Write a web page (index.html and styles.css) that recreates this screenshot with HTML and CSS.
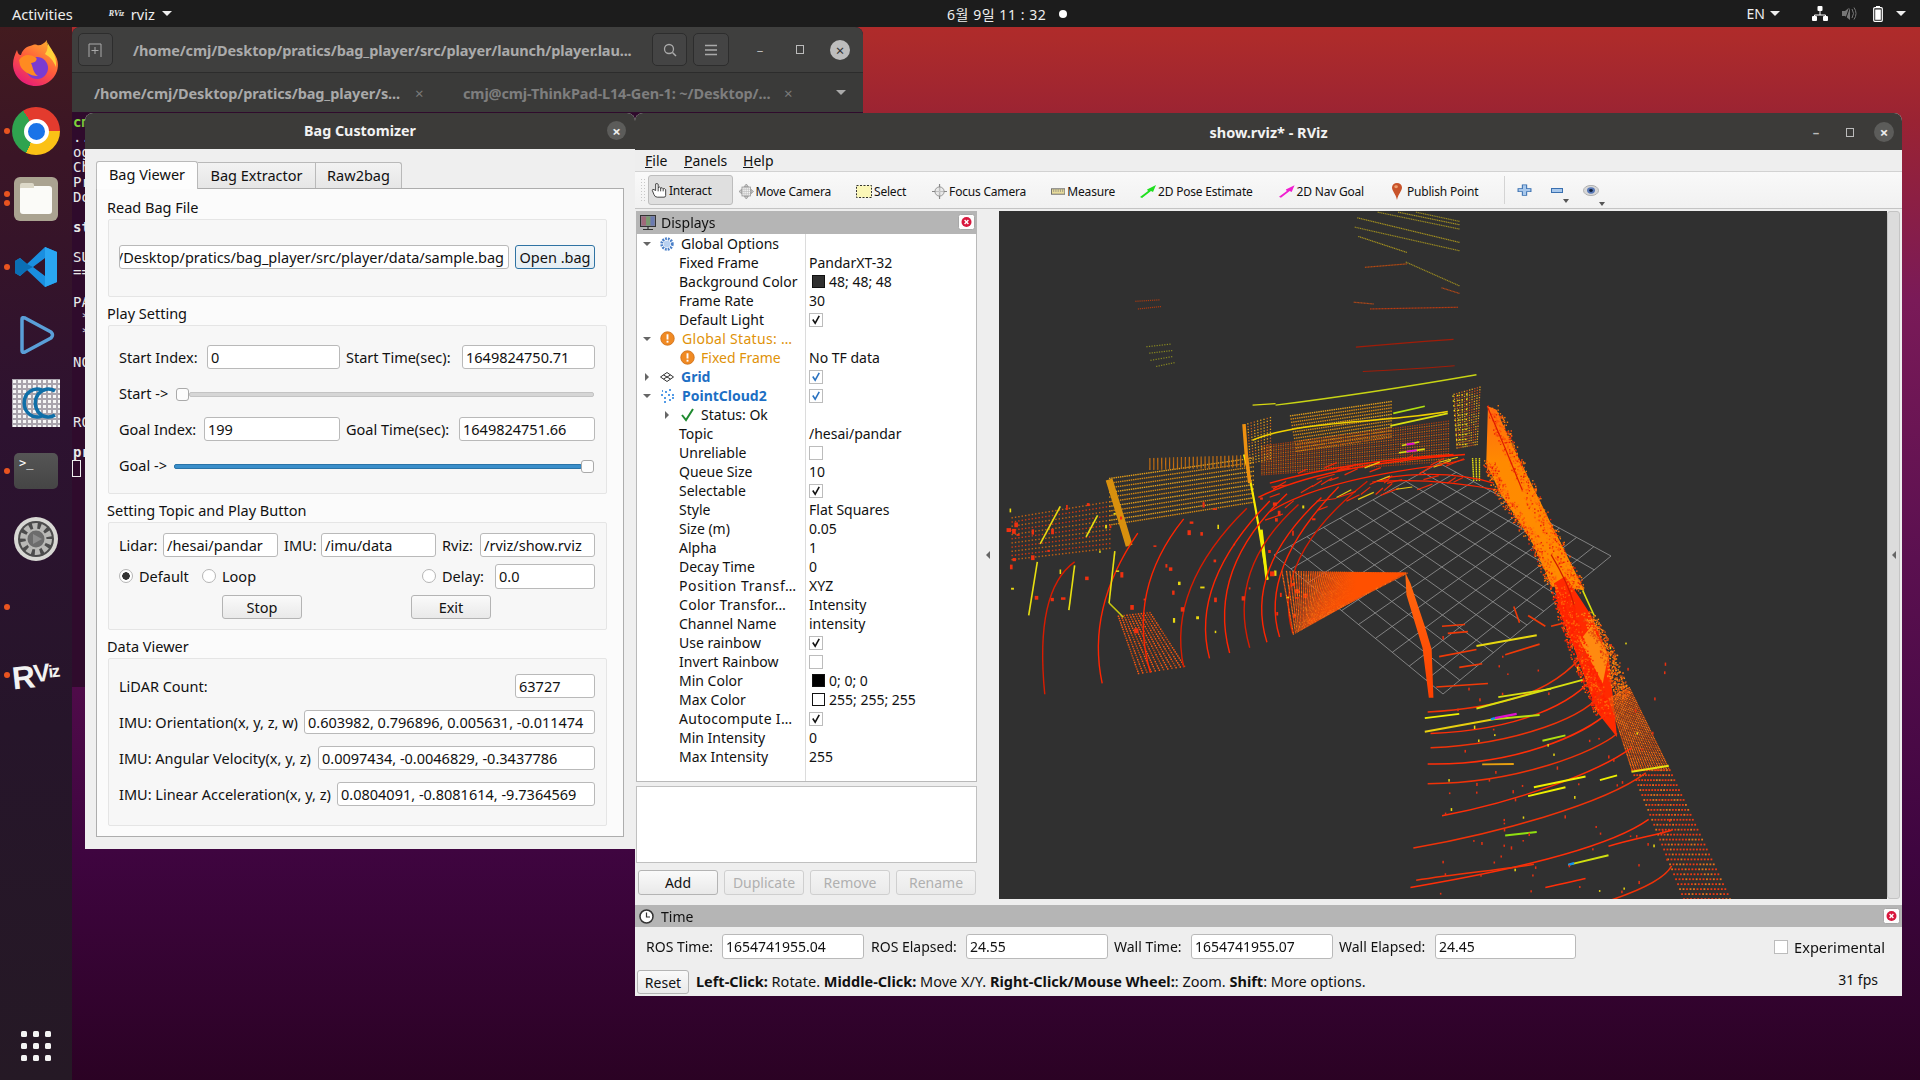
FILE: index.html
```html
<!DOCTYPE html>
<html lang="en">
<head>
<meta charset="utf-8">
<title>rviz desktop</title>
<link rel="stylesheet" href="styles.css">
</head>
<body>
<svg class="defs" width="0" height="0" aria-hidden="true">
  <symbol id="check" viewBox="0 0 13 13"><path d="M3 6.5 5.6 10.5 10 2.5" fill="none" stroke="currentColor" stroke-width="1.7"/></symbol>
  <symbol id="warn" viewBox="0 0 16 16"><circle cx="8" cy="8" r="7.2" fill="#f08a24" stroke="#c96a10" stroke-width="0.8"/><rect x="7" y="3.5" width="2" height="5.6" fill="#fff"/><rect x="7" y="10.4" width="2" height="2" fill="#fff"/></symbol>
  <symbol id="panelclose" viewBox="0 0 17 16"><rect x="0.5" y="0.5" width="16" height="15" rx="2" fill="#fdfdfd" stroke="#a8a8a8"/><circle cx="8.5" cy="8" r="5" fill="#d8163c"/><path d="M6.6 6.1 10.4 9.9M10.4 6.1 6.6 9.9" stroke="#fff" stroke-width="1.4"/></symbol>
</svg>
<div class="screen">
  <header class="topbar">
    <span class="activities">Activities</span>
    <span class="appmenu"><span class="appmenu-logo">RViz</span><span>rviz</span><i class="caret"></i></span>
    <span class="clock">6월 9일 11 : 32<i class="clock-dot"></i></span>
    <span class="status">
      <span class="lang">EN</span><i class="caret"></i>
      <svg class="st-net" width="16" height="15" viewBox="0 0 16 15"><path d="M8 5V9M2.5 11V9H13.500V11" fill="none" stroke="#fff"/><rect x="5.500" y="0" width="5" height="5" rx="1" fill="#fff"/><rect x="0" y="10" width="5" height="5" rx="1" fill="#fff"/><rect x="11" y="10" width="5" height="5" rx="1" fill="#fff"/></svg>
      <svg class="st-vol" width="15" height="15" viewBox="0 0 15 15"><path d="M0 5H3L8 1V14L3 10H0Z" fill="#777"/><path d="M10 3Q13 7.500 10 12M12 1.500Q16 7.500 12 13.500" fill="none" stroke="#777"/><path d="M8 0 3 15" stroke="#1c1c1c"/></svg>
      <svg class="st-bat" width="10" height="16" viewBox="0 0 10 16"><rect x="3" y="0" width="4" height="2" fill="#fff"/><rect x="0.700" y="1.700" width="8.600" height="13.600" rx="1" fill="none" stroke="#fff" stroke-width="1.200"/><rect x="2.200" y="3.500" width="5.600" height="10.300" fill="#fff"/></svg>
      <i class="caret"></i>
    </span>
  </header>

  <main class="desktop">
    <nav class="dock">
      <div class="slot">
        <svg width="46" height="46" viewBox="0 0 46 46">
          <defs>
            <linearGradient id="ffa" x1="0.200" y1="1" x2="0.800" y2="0"><stop offset="0" stop-color="#e3157e"/><stop offset="0.500" stop-color="#ff5a3c"/><stop offset="1" stop-color="#ffb12b"/></linearGradient>
          </defs>
          <path d="M34 0C33 5 36 7 40 12 45 18 46 25 44 31 41 40 32 46 23 46 10 46 0 36 0 24 0 19 2 14 4 10 5 14 6 15 8 15 9 11 12 7 17 6 20 5 22 4 24 5 27 6 31 4 34 0Z" fill="url(#ffa)"/>
          <circle cx="24" cy="28" r="11" fill="#7b3bd0"/>
          <path d="M6 20C10 14 17 14 22 17 26 19 22 23 18 23 20 27 20 33 25 36 17 36 9 31 7 25Z" fill="#ff8b21"/>
          <path d="M34 2C38 9 44 15 43 27 40 20 37 17 32 14 35 10 35 6 34 2Z" fill="#ffd23a"/>
        </svg>
      </div>
      <div class="slot"><i class="run"></i><div class="chrome"><div class="chrome-core"></div></div></div>
      <div class="slot"><i class="run run-two"></i><div class="files"><div class="folder"></div></div></div>
      <div class="slot"><i class="run"></i>
        <svg width="42" height="42" viewBox="0 0 42 42"><path d="M30 1 42 6V36L30 41 12 24 5 30 0 27V15L5 12 12 18 30 1ZM30 12 18 21 30 30Z" fill="#1a8fe0"/><path d="M30 1 42 6V36L30 41V1Z" fill="#2aa6f2"/><path d="M5 12 12 18 18 21 12 24 5 30 0 27V15Z" fill="#0b6fb5"/></svg>
      </div>
      <div class="slot">
        <svg width="38" height="40" viewBox="0 0 38 40"><path d="M5 4Q5 2 8 3L34 17Q37 20 34 23L8 37Q5 38 5 36Z" fill="none" stroke="#5a9fd8" stroke-width="3.500" stroke-linejoin="round"/></svg>
      </div>
      <div class="slot">
        <div class="cc">
          <svg width="48" height="48" viewBox="0 0 48 48"><path d="M30 11A13 14 0 1 0 30 37" fill="none" stroke="#0f6fa8" stroke-width="3.500"/><path d="M43 12A13 14 0 1 0 43 36" fill="none" stroke="#0f6fa8" stroke-width="3.500"/></svg>
        </div>
      </div>
      <div class="slot"><i class="run"></i><div class="termicon">&gt;_</div></div>
      <div class="slot">
        <svg width="46" height="46" viewBox="0 0 46 46"><circle cx="23" cy="23" r="22" fill="#d8d8d4"/><circle cx="23" cy="23" r="18" fill="#4c4c4c"/><circle cx="23" cy="23" r="13" fill="none" stroke="#b9b9b6" stroke-width="6" stroke-dasharray="5 3.200"/><circle cx="23" cy="23" r="9.500" fill="#6c6c6c" stroke="#b9b9b6" stroke-width="2"/><path d="M20 18 29 23 20 28Z" fill="#8d8d8d"/></svg>
      </div>
      <div class="slot"><i class="run"></i></div>
      <div class="slot"><i class="run"></i><div class="rvizlogo">R<span class="rvizlogo-v">V</span><span class="rvizlogo-iz">iz</span></div></div>
      <div class="slot slot-last">
        <div class="apps"><i></i><i></i><i></i><i></i><i></i><i></i><i></i><i></i><i></i></div>
      </div>
    </nav>

    <section class="window term">
      <div class="term-head">
        <span class="hbtn hbtn-new"><svg width="16" height="16" viewBox="0 0 16 16"><path d="M1 15V2H13V15M7 5V12M3.500 8.500H10.500" fill="none" stroke="#aaa"/></svg></span>
        <span class="term-title">/home/cmj/Desktop/pratics/bag_player/src/player/launch/player.lau...</span>
        <span class="hbtn hbtn-search"><svg width="16" height="16" viewBox="0 0 16 16"><circle cx="7" cy="7" r="4.500" fill="none" stroke="#aaa" stroke-width="1.300"/><path d="M10.500 10.500 14 14" stroke="#aaa" stroke-width="1.500"/></svg></span>
        <span class="hbtn hbtn-menu"><svg width="14" height="12" viewBox="0 0 14 12"><path d="M1 1.500H13M1 6H13M1 10.500H13" stroke="#aaa" stroke-width="1.300"/></svg></span>
        <span class="wbtns wbtns-term">
          <span class="wb">–</span><span class="wb"><i class="wb-square"></i></span><span class="wb wb-close wb-close-light">×</span>
        </span>
      </div>
      <div class="term-tabs">
        <span class="ttab ttab-on">/home/cmj/Desktop/pratics/bag_player/s...</span><span class="ttab-x">×</span>
        <span class="ttab ttab-off">cmj@cmj-ThinkPad-L14-Gen-1: ~/Desktop/...</span><span class="ttab-x">×</span>
        <i class="caret caret-term"></i>
      </div>
      <pre class="term-body"><b class="tg">cm</b>
...
og
Ch
Pr
Do

<b>st</b>

SU
==

PA
 *
 *

NO



RO

<b>pr</b></pre>
      <i class="term-cursor"></i>
    </section>

    <section class="window bag">
      <div class="titlebar bag-title">
        <span>Bag Customizer</span>
        <span class="wb wb-close bag-close">×</span>
      </div>
      <div class="bag-body">
        <div class="tabs">
          <span class="tab tab-on">Bag Viewer</span>
          <span class="tab tab-ext">Bag Extractor</span>
          <span class="tab tab-raw">Raw2bag</span>
        </div>
        <div class="pane">
          <div class="grp-label">Read Bag File</div>
          <div class="grp grp-read">
            <div class="row gap6">
              <div class="field field-clip w390">/Desktop/pratics/bag_player/src/player/data/sample.bag</div>
              <button class="btn btn-focus w80">Open .bag</button>
            </div>
          </div>

          <div class="grp-label">Play Setting</div>
          <div class="grp grp-play">
            <div class="row">
              <label class="w88">Start Index:</label><div class="field w133">0</div>
              <label class="w116 ml6">Start Time(sec):</label><div class="field w133">1649824750.71</div>
            </div>
            <div class="slider-row sr-start">
              <label class="w57">Start -&gt;</label>
              <i class="handle"></i><i class="groove"></i>
            </div>
            <div class="row">
              <label class="w85">Goal Index:</label><div class="field w136">199</div>
              <label class="w113 ml6">Goal Time(sec):</label><div class="field w136">1649824751.66</div>
            </div>
            <div class="slider-row sr-goal">
              <label class="w55">Goal -&gt;</label>
              <i class="groove groove-on"></i><i class="handle handle-end"></i>
            </div>
          </div>

          <div class="grp-label">Setting Topic and Play Button</div>
          <div class="grp grp-topic">
            <div class="row">
              <label class="w44">Lidar:</label><div class="field w115">/hesai/pandar</div>
              <label class="w37 ml6">IMU:</label><div class="field w115">/imu/data</div>
              <label class="w38 ml6">Rviz:</label><div class="field w115">/rviz/show.rviz</div>
            </div>
            <div class="row row-radio">
              <label class="radio-item w83"><i class="radio radio-on"></i>Default</label>
              <label class="radio-item w220"><i class="radio"></i>Loop</label>
              <label class="radio-item w73"><i class="radio"></i>Delay:</label>
              <div class="field w100">0.0</div>
            </div>
            <div class="row row-btns">
              <button class="btn w80 ml103">Stop</button>
              <button class="btn w80 ml109">Exit</button>
            </div>
          </div>

          <div class="grp-label">Data Viewer</div>
          <div class="grp grp-data">
            <div class="row row-sb"><label>LiDAR Count:</label><div class="field w80">63727</div></div>
            <div class="row row-sb"><label>IMU: Orientation(x, y, z, w)</label><div class="field w291">0.603982, 0.796896, 0.005631, -0.011474</div></div>
            <div class="row row-sb"><label>IMU: Angular Velocity(x, y, z)</label><div class="field w277">0.0097434, -0.0046829, -0.3437786</div></div>
            <div class="row row-sb"><label>IMU: Linear Acceleration(x, y, z)</label><div class="field w258">0.0804091, -0.8081614, -9.7364569</div></div>
          </div>
        </div>
      </div>
    </section>

    <section class="window rviz">
      <div class="titlebar rviz-title">
        <span>show.rviz* - RViz</span>
        <span class="wbtns wbtns-rviz">
          <span class="wb">–</span><span class="wb"><i class="wb-square"></i></span><span class="wb wb-close">×</span>
        </span>
      </div>
      <div class="menubar">
        <span><u>F</u>ile</span><span><u>P</u>anels</span><span><u>H</u>elp</span>
      </div>
      <div class="toolbar">
        <i class="tb-grip"></i>
        <span class="tool t-interact">
          <svg width="16" height="15" viewBox="0 0 18 18"><path d="M5 1V9L3 8Q1 7 1 9L3 14Q4 17 7 17H15Q17 17 17 15V8Q16 6 14 7 13 5 11 6 10 4 8 5.500V1.500Q6.500 0 5 1ZM8 5.500V10M11 6V10M14 7V10" fill="#fff" stroke="#222"/></svg>
          Interact
        </span>
        <span class="tool t-move">
          <svg width="16" height="15" viewBox="0 0 17 17" preserveAspectRatio="none"><path d="M8.500 0 11 3H6ZM8.500 17 6 14H11ZM0 8.500 3 6V11ZM17 8.500 14 11V6Z" fill="#c8c8c8" stroke="#777" stroke-width="0.600"/><rect x="3.500" y="3.500" width="10" height="10" fill="none" stroke="#999"/><path d="M8.500 3V14M3 8.500H14M3.500 6H13.500M3.500 11H13.500M6 3.500V13.500M11 3.500V13.500" stroke="#bbb" stroke-width="0.700"/></svg>
          Move Camera
        </span>
        <span class="tool t-select">
          <svg width="16" height="13" viewBox="0 0 16 14" preserveAspectRatio="none"><rect x="0.500" y="0.500" width="15" height="13" fill="#fbf7b8" stroke="#222" stroke-dasharray="2 1.500"/></svg>
          Select
        </span>
        <span class="tool t-focus">
          <svg width="18" height="17" viewBox="0 0 18 18"><circle cx="9" cy="9" r="5.500" fill="#e8e8e8" stroke="#888"/><path d="M9 0V18M0 9H18" stroke="#888" stroke-width="1.400"/><path d="M9 4V14M4 9H14" stroke="#ccc"/></svg>
          Focus Camera
        </span>
        <span class="tool t-measure">
          <svg width="16" height="7" viewBox="0 0 16 7"><rect x="0.500" y="0.500" width="15" height="6" fill="#e8dc9c" stroke="#666"/><path d="M3 1V4M5.500 1V4M8 1V4M10.500 1V4M13 1V4" stroke="#777" stroke-width="0.700"/></svg>
          Measure
        </span>
        <span class="tool t-pose">
          <svg width="16" height="13" viewBox="0 0 16 13"><path d="M0 12 8 6 7 4.500 16 0 13 7 11 6 2 13Z" fill="#20e020"/></svg>
          2D Pose Estimate
        </span>
        <span class="tool t-nav">
          <svg width="16" height="13" viewBox="0 0 16 13"><path d="M0 12 8 6 7 4.500 16 0 13 7 11 6 2 13Z" fill="#f01fd0"/></svg>
          2D Nav Goal
        </span>
        <span class="tool t-pub">
          <svg width="10" height="17" viewBox="0 0 11 23" preserveAspectRatio="none"><path d="M5.500 0A5.500 6 0 0 1 11 6C11 11 7 14 5.500 23 4 14 0 11 0 6A5.500 6 0 0 1 5.500 0Z" fill="#c8532a"/><circle cx="4.500" cy="5" r="2" fill="#f0a070"/></svg>
          Publish Point
        </span>
        <i class="tb-sep"></i>
        <svg class="tb-ic tb-plus" width="15" height="12" viewBox="0 0 14 16" preserveAspectRatio="none"><path d="M5 1H9V6H13V10H9V15H5V10H1V6H5Z" fill="#a8c8ec" stroke="#3a70b0"/></svg>
        <span class="tb-ic tb-minus"><svg width="12" height="5" viewBox="0 0 12 5"><rect x="0.500" y="0.500" width="11" height="4" fill="#a8c8ec" stroke="#3a70b0"/></svg><i class="tb-drop"></i></span>
        <span class="tb-ic tb-eye"><svg width="16" height="11" viewBox="0 0 16 14" preserveAspectRatio="none"><ellipse cx="8" cy="7" rx="7.500" ry="6.500" fill="#d8d8d8" stroke="#aaa"/><circle cx="8" cy="7" r="4" fill="#5a7ab8"/><circle cx="8" cy="7" r="1.800" fill="#10203c"/></svg><i class="tb-drop"></i></span>
      </div>

      <div class="rv-main">
        <div class="displays">
          <div class="paneltitle">
            <svg width="16" height="15" viewBox="0 0 16 15"><rect x="0.500" y="0.500" width="15" height="11" fill="#889" stroke="#333"/><rect x="1.500" y="1.500" width="4.500" height="9" fill="#a06a7a"/><rect x="6" y="1.500" width="4.500" height="9" fill="#7a9a70"/><rect x="10.500" y="1.500" width="4" height="9" fill="#6a7ab0"/><path d="M3 14.500H13M8 12V14" stroke="#333" stroke-width="1.200"/></svg>
            <span class="pt-name">Displays</span>
            <svg class="pt-close" width="17" height="16"><use href="#panelclose"/></svg>
          </div>
          <div class="tree">
            <div class="tr"><div class="nm"><i class="ar ar-d"></i><svg class="ic" width="14" height="14" viewBox="0 0 14 14"><circle cx="7" cy="7" r="5.300" fill="none" stroke="#4a7fc8" stroke-width="2.800" stroke-dasharray="1.800 1"/><circle cx="7" cy="7" r="3.300" fill="#b8d0f0"/></svg>Global Options</div><div class="vl"></div></div>
            <div class="tr"><div class="nm nm-c">Fixed Frame</div><div class="vl">PandarXT-32</div></div>
            <div class="tr"><div class="nm nm-c">Background Color</div><div class="vl"><i class="swatch sw-bg"></i>48; 48; 48</div></div>
            <div class="tr"><div class="nm nm-c">Frame Rate</div><div class="vl">30</div></div>
            <div class="tr"><div class="nm nm-c">Default Light</div><div class="vl"><i class="cb"><svg width="13" height="13"><use href="#check"/></svg></i></div></div>
            <div class="tr"><div class="nm c-warn ls3"><i class="ar ar-d"></i><svg class="ic" width="15" height="15"><use href="#warn"/></svg>Global Status: …</div><div class="vl"></div></div>
            <div class="tr"><div class="nm nm-l1 c-warn"><svg class="ic-l1" width="15" height="15"><use href="#warn"/></svg>Fixed Frame</div><div class="vl">No TF data</div></div>
            <div class="tr"><div class="nm c-blue"><i class="ar ar-r"></i><svg class="ic" width="14" height="10" viewBox="0 0 14 10"><path d="M7 .5 13.500 5 7 9.500 .5 5ZM3.500 3 10.500 7M10.500 3 3.500 7" fill="none" stroke="#333"/></svg>Grid</div><div class="vl"><i class="cb cb-blue"><svg width="13" height="13"><use href="#check"/></svg></i></div></div>
            <div class="tr"><div class="nm c-blue"><i class="ar ar-d"></i><svg class="ic" width="15" height="14" viewBox="0 0 15 14"><path d="M1 6H3M5 3H7M4 9H6M9 1H11M8 6H10M12 6H14M9 11H11M4 13H6M12 9H14M2 2H3" stroke="#1c7ce0" stroke-width="1.600"/></svg>PointCloud2</div><div class="vl"><i class="cb cb-blue"><svg width="13" height="13"><use href="#check"/></svg></i></div></div>
            <div class="tr"><div class="nm nm-l1"><i class="ar ar-r ar-l1"></i><svg class="ic-l1" width="15" height="14" viewBox="0 0 15 14"><path d="M2 7 6 12 13 1" fill="none" stroke="#1f8a30" stroke-width="2"/></svg>Status: Ok</div><div class="vl"></div></div>
            <div class="tr"><div class="nm nm-c">Topic</div><div class="vl">/hesai/pandar</div></div>
            <div class="tr"><div class="nm nm-c">Unreliable</div><div class="vl"><i class="cb"></i></div></div>
            <div class="tr"><div class="nm nm-c">Queue Size</div><div class="vl">10</div></div>
            <div class="tr"><div class="nm nm-c">Selectable</div><div class="vl"><i class="cb"><svg width="13" height="13"><use href="#check"/></svg></i></div></div>
            <div class="tr"><div class="nm nm-c">Style</div><div class="vl">Flat Squares</div></div>
            <div class="tr"><div class="nm nm-c">Size (m)</div><div class="vl">0.05</div></div>
            <div class="tr"><div class="nm nm-c">Alpha</div><div class="vl">1</div></div>
            <div class="tr"><div class="nm nm-c">Decay Time</div><div class="vl">0</div></div>
            <div class="tr"><div class="nm nm-c ls6">Position Transf…</div><div class="vl">XYZ</div></div>
            <div class="tr"><div class="nm nm-c ls3">Color Transfor…</div><div class="vl">Intensity</div></div>
            <div class="tr"><div class="nm nm-c">Channel Name</div><div class="vl">intensity</div></div>
            <div class="tr"><div class="nm nm-c">Use rainbow</div><div class="vl"><i class="cb"><svg width="13" height="13"><use href="#check"/></svg></i></div></div>
            <div class="tr"><div class="nm nm-c">Invert Rainbow</div><div class="vl"><i class="cb"></i></div></div>
            <div class="tr"><div class="nm nm-c">Min Color</div><div class="vl"><i class="swatch sw-min"></i>0; 0; 0</div></div>
            <div class="tr"><div class="nm nm-c">Max Color</div><div class="vl"><i class="swatch sw-max"></i>255; 255; 255</div></div>
            <div class="tr"><div class="nm nm-c ls3">Autocompute I…</div><div class="vl"><i class="cb"><svg width="13" height="13"><use href="#check"/></svg></i></div></div>
            <div class="tr"><div class="nm nm-c">Min Intensity</div><div class="vl">0</div></div>
            <div class="tr"><div class="nm nm-c">Max Intensity</div><div class="vl">255</div></div>
            <div class="tr tr-fill"><div class="nm"></div><div class="vl"></div></div>
          </div>
          <div class="descbox"></div>
          <div class="dbtns">
            <button class="btn w80">Add</button>
            <button class="btn btn-off w80">Duplicate</button>
            <button class="btn btn-off w80">Remove</button>
            <button class="btn btn-off w80">Rename</button>
          </div>
        </div>
        <div class="split"><i class="tri-l"></i></div>
        <canvas id="cloud" class="view" width="888" height="688"></canvas>
        <div class="sidebar"><i class="tri-l"></i></div>
      </div>

      <div class="paneltitle time-title">
        <svg width="15" height="15" viewBox="0 0 15 15"><circle cx="7.500" cy="7.500" r="6.500" fill="#fff" stroke="#333" stroke-width="1.500"/><path d="M7.500 3.500V8H11" fill="none" stroke="#333" stroke-width="1.200"/></svg>
        <span class="pt-name">Time</span>
        <svg class="pt-close" width="17" height="16"><use href="#panelclose"/></svg>
      </div>
      <div class="timerow">
        <label class="w76">ROS Time:</label><div class="field w142">1654741955.04</div>
        <label class="w95 ml7">ROS Elapsed:</label><div class="field w142">24.55</div>
        <label class="w77 ml6">Wall Time:</label><div class="field w142">1654741955.07</div>
        <label class="w96 ml6">Wall Elapsed:</label><div class="field w141">24.45</div>
        <label class="exp"><i class="cb"></i>Experimental</label>
      </div>
      <div class="statusrow">
        <button class="btn w52">Reset</button>
        <span class="hint"><b>Left-Click:</b> Rotate. <b>Middle-Click:</b> Move X/Y. <b>Right-Click/Mouse Wheel:</b>: Zoom. <b>Shift</b>: More options.</span>
        <span class="fps">31 fps</span>
      </div>
    </section>
  </main>
</div>
<script src="script.js"></script>
</body>
</html>
```
FILE: styles.css
```css
* { box-sizing: border-box; }
html, body { margin: 0; padding: 0; }
body { font-family: "Noto Sans", "Noto Sans CJK KR", sans-serif; font-size: 14px; color: #111; }
.defs { position: absolute; }
i { display: block; font-style: normal; }
label { display: block; white-space: nowrap; }

.screen {
  width: 1920px; height: 1080px; display: flex; flex-direction: column; overflow: hidden;
  background: linear-gradient(180deg, #b52b2a 0, #ad2b2b 40px, #9a2333 120px, #7a1a58 300px, #5b1050 560px, #3f0540 850px, #2b0224 1080px);
}

/* top bar */
.topbar { height: 27px; flex: none; background: #1c1c1c; color: #eee; display: flex; align-items: center; position: relative; font-size: 14px; }
.activities { margin-left: 12px; font-size: 14.6px; }
.appmenu { display: flex; align-items: center; margin-left: 36px; gap: 7px; font-size: 14.6px; }
.appmenu-logo { font: bold italic 8px "Liberation Serif", serif; width: 15px; }
.caret { width: 0; height: 0; border-left: 5px solid transparent; border-right: 5px solid transparent; border-top: 5px solid #eee; }
.clock { position: absolute; left: 947px; display: flex; align-items: center; letter-spacing: .55px; }
.clock-dot { width: 8px; height: 8px; border-radius: 50%; background: #fff; margin-left: 13px; }
.status { margin-left: auto; display: flex; align-items: center; margin-right: 14px; }
.lang { margin-right: 5px; font-size: 14px; }
.st-net { margin-left: 32px; }
.st-vol { margin-left: 14px; }
.st-bat { margin-left: 16px; margin-right: 13px; }

/* desktop and dock */
.desktop { flex: 1; position: relative; }
.dock { position: absolute; left: 0; top: 0; bottom: 0; width: 72px; background: linear-gradient(180deg, #431b1f 0, #3a1526 130px, #2d1230 400px, #26152a 700px, #251925 100%); display: flex; flex-direction: column; padding-top: 2px; }
.slot { height: 68px; flex: none; display: flex; align-items: center; justify-content: center; position: relative; }
.slot-last { margin-top: auto; }
.run { position: absolute; left: 4px; top: 31px; width: 6px; height: 6px; border-radius: 50%; background: #e95420; }
.run-two { top: 26px; box-shadow: 0 9px 0 #e95420; }
.chrome { width: 48px; height: 48px; border-radius: 50%; background: conic-gradient(from -32deg, #e33b2e 0 122deg, #fbc116 122deg 236deg, #2fa34f 236deg 360deg); display: flex; align-items: center; justify-content: center; }
.chrome-core { width: 25px; height: 25px; border-radius: 50%; background: #1a73e8; border: 4px solid #fff; }
.files { width: 44px; height: 44px; border-radius: 6px; background: #aaa391; display: flex; align-items: center; justify-content: center; }
.folder { width: 32px; height: 28px; background: #fbfbf8; border-radius: 3px; position: relative; margin-top: 2px; }
.folder::before { content: ""; position: absolute; left: 0; top: -3px; width: 14px; height: 5px; background: #dcd8c8; border-radius: 2px 2px 0 0; }
.cc { width: 48px; height: 48px; background-color: #a9a4ad; background-image: radial-gradient(circle, #f6f6f6 1.500px, transparent 1.700px); background-size: 5px 5px; }
.termicon { width: 44px; height: 36px; border-radius: 5px; background: linear-gradient(#555, #454545); color: #fff; font: 12px/12px "DejaVu Sans Mono", monospace; padding: 4px 0 0 5px; }
.rvizlogo { color: #f2f2f2; font: bold 32px/32px "Liberation Sans", sans-serif; letter-spacing: -1.500px; transform: rotate(-6deg); display: flex; align-items: flex-start; margin-top: 2px; }
.rvizlogo-v { font-size: 25px; line-height: 26px; }
.rvizlogo-iz { font-size: 17px; line-height: 20px; margin-top: 4px; }
.apps { display: grid; grid-template-columns: repeat(3, 6px); gap: 6px; }
.apps i { width: 6px; height: 6px; border-radius: 1.500px; background: #f4f4f4; }

/* windows */
.window { position: absolute; border-radius: 8px 8px 0 0; overflow: hidden; }
.wb { width: 20px; height: 20px; display: flex; align-items: center; justify-content: center; color: #bbb; font-size: 13px; }
.wb-square { width: 8px; height: 9px; border: 1px solid #bbb; }
.wb-close { border-radius: 50%; background: #5c5c5a; color: #eee; font-size: 15px; }
.wb-close-light { background: #bdbdbd; color: #333; }
.titlebar { flex: none; background: #3c3b39; color: #f2f2f2; font-weight: 700; display: flex; align-items: center; justify-content: center; position: relative; font-size: 14.300px; }

/* terminal */
.term { left: 72px; top: 0; width: 791px; height: 660px; background: #2f0b2c; display: flex; flex-direction: column; }
.term-head { height: 46px; background: #3f3f3e; border-bottom: 1px solid #2c2c2c; display: flex; align-items: center; padding-left: 6px; flex: none; }
.hbtn { height: 33px; border: 1px solid #2d2d2d; border-radius: 5px; display: flex; align-items: center; justify-content: center; background: #444; flex: none; }
.hbtn-new { width: 35px; }
.hbtn-search { width: 35px; margin-left: 20px; }
.hbtn-menu { width: 36px; margin-left: 6px; }
.term-title { color: #ababab; font-weight: 700; font-size: 14.5px; letter-spacing: -.12px; width: 499px; margin-left: 20px; white-space: nowrap; flex: none; }
.wbtns { display: flex; align-items: center; }
.wbtns-term { margin-left: 21px; gap: 20px; }
.term-tabs { height: 39px; background: #3a3a39; display: flex; align-items: center; padding-left: 22px; flex: none; font-weight: 700; font-size: 14.5px; letter-spacing: -.12px; white-space: nowrap; }
.ttab { width: 306px; flex: none; }
.ttab-on { color: #a9a9a9; }
.ttab-off { color: #7e7e7e; margin-left: 38px; }
.ttab-x { color: #7a7a7a; font-weight: 400; margin-left: 15px; width: 10px; font-size: 15px; }
.caret-term { margin-left: 42px; border-top-color: #aaa; }
.term-body { margin: 3px 0 0; padding-left: 1px; font: 14px/15px "DejaVu Sans Mono", monospace; color: #e8e8e8; }
.term-body b { font-weight: 700; }
.tg { color: #7fd13b; }
.term-cursor { position: absolute; left: 0; top: 433px; width: 9px; height: 17px; border: 1px solid #eee; }

/* bag customizer */
.bag { left: 85px; top: 86px; width: 550px; height: 736px; background: #efefef; display: flex; flex-direction: column; }
.bag-title { height: 36px; padding-bottom: 2px; }
.bag-close { position: absolute; right: 9px; top: 8px; width: 19px; height: 19px; }
.bag-body { flex: 1; padding: 11px 11px 0; font-size: 14.5px; }
.tabs { display: flex; height: 28px; align-items: flex-end; }
.tab { height: 26px; display: flex; align-items: center; justify-content: center; padding-bottom: 2px; background: linear-gradient(#f2f2f2, #e6e6e6); border: 1px solid #b9b9b9; border-bottom: none; }
.tab-on { width: 102px; height: 28px; padding-bottom: 3px; background: #fdfdfd; border-radius: 3px 3px 0 0; position: relative; top: 1px; z-index: 1; }
.tab-ext { width: 118px; border-left: none; }
.tab-raw { width: 86px; border-left: none; border-radius: 0 3px 0 0; }
.pane { width: 528px; height: 649px; border: 1px solid #adadad; background: #fbfbfb; padding: 9px 16px 0 10px; }
.grp-label { height: 21px; line-height: 19px; margin-top: 7px; white-space: nowrap; }
.grp-label:first-child { margin-top: 0; }
.grp { margin-left: 1px; width: 499px; border: 1px solid #e5e5e5; border-radius: 2px; background: #f7f7f7; padding: 0 11px 0 10px; }
.grp-read { height: 78px; padding-top: 25px; }
.grp-play { height: 169px; padding-top: 19px; }
.grp-topic { height: 108px; padding-top: 10px; }
.grp-data { height: 168px; padding-top: 15px; display: flex; flex-direction: column; gap: 12px; }
.row { display: flex; align-items: center; height: 24px; white-space: nowrap; }
.row-sb { justify-content: space-between; }
.gap6 { gap: 6px; }
.row-radio { margin-top: 7px; height: 25px; }
.row-btns { margin-top: 6px; }
.field { height: 100%; background: #fff; border: 1px solid #b9b9b9; border-radius: 3px; padding: 0 3px 1px; display: flex; align-items: center; white-space: nowrap; overflow: hidden; flex: none; color: #111; }
.field-clip { justify-content: flex-end; padding-right: 4px; }
.btn { font: inherit; color: #111; height: 24px; flex: none; padding: 0; border: 1px solid #b4b4b4; border-radius: 3px; background: linear-gradient(#fafafa, #e9e9e9); }
.btn-focus { border-color: #2f73a3; background: linear-gradient(#f1f6f9, #e4edf3); }
.btn-off { color: #b0b0b0; border-color: #cfcfcf; background: linear-gradient(#f4f4f4, #eaeaea); }
.slider-row { height: 20px; display: flex; align-items: center; margin: 15px 0 13px; }
.slider-row label { padding-bottom: 2px; }
.sr-goal { margin: 15px 0 0; }
.handle { width: 13px; height: 13px; flex: none; border: 1px solid #aaa; border-radius: 3px; background: #fdfdfd; position: relative; z-index: 1; }
.groove { height: 5px; width: 405px; background: #d6d6d6; border: 1px solid #c4c4c4; border-radius: 2px; }
.groove-on { width: 408px; background: #3a8fcb; border-color: #2a74a8; margin-right: -1px; }
.radio-item { display: flex; align-items: center; padding-bottom: 2px; }
.radio { width: 14px; height: 14px; border-radius: 50%; border: 1px solid #b5b5b5; background: #fff; margin-right: 6px; flex: none; }
.radio-on { background: radial-gradient(circle, #333 0 3.500px, #fff 4px); }

.w37 { width: 37px; flex: none; } .w38 { width: 38px; flex: none; } .w44 { width: 44px; flex: none; } .w52 { width: 52px; }
.w55 { width: 55px; flex: none; } .w57 { width: 57px; flex: none; } .w73 { width: 73px; flex: none; } .w76 { width: 76px; flex: none; } .w77 { width: 77px; flex: none; }
.w80 { width: 80px; } .w83 { width: 83px; flex: none; } .w85 { width: 85px; flex: none; } .w88 { width: 88px; flex: none; } .w95 { width: 95px; flex: none; } .w96 { width: 96px; flex: none; }
.w100 { width: 100px; } .w113 { width: 113px; flex: none; } .w115 { width: 115px; } .w116 { width: 116px; flex: none; } .w133 { width: 133px; } .w136 { width: 136px; }
.w141 { width: 141px; } .w142 { width: 142px; } .w220 { width: 220px; flex: none; } .w258 { width: 258px; } .w277 { width: 277px; } .w291 { width: 291px; } .w390 { width: 390px; }
.ml6 { margin-left: 6px; } .ml7 { margin-left: 7px; } .ml103 { margin-left: 103px; } .ml109 { margin-left: 109px; }
.ls3 { letter-spacing: .3px; } .ls6 { letter-spacing: .6px; }

/* rviz */
.rviz { left: 635px; top: 86px; width: 1267px; height: 883px; background: #eeeeee; display: flex; flex-direction: column; }
.rviz-title { height: 37px; font-size: 14.5px; }
.wbtns-rviz { position: absolute; right: 8px; top: 9px; gap: 14px; }
.menubar { height: 22px; flex: none; border-bottom: 1px solid #d2d2d2; display: flex; align-items: center; padding-left: 10px; gap: 0; }
.menubar span:nth-child(1) { width: 39px; } .menubar span:nth-child(2) { width: 59px; }
.toolbar { height: 37px; flex: none; border-bottom: 1px solid #c4c4c4; background: linear-gradient(#f9f9f9, #f1f1f1); display: flex; align-items: center; padding-left: 5px; font-size: 12px; letter-spacing: -.2px; gap: 25px; }
.tb-grip { width: 6px; height: 24px; margin-right: -23px; background-image: radial-gradient(circle, #c8c8c8 .800px, transparent 1px); background-size: 3px 3px; }
.tool { display: flex; align-items: center; gap: 2px; white-space: nowrap; flex: none; height: 30px; padding-top: 2px; }
.t-interact { width: 85px; padding-left: 2px; padding-top: 1px; background: #dfdfdf; border: 1px solid #bdbdbd; border-radius: 3px; }
.t-move { width: 92px; margin-left: -19px; }
.t-select { width: 51px; }
.t-focus { width: 94px; }
.t-measure { width: 64px; }
.t-pose { width: 114px; }
.t-nav { width: 85px; }
.t-pub { width: 87px; margin-left: 3px; gap: 5px; }
.tb-sep { width: 1px; height: 28px; background: #d4d4d4; }
.tb-ic { flex: none; position: relative; display: flex; align-items: center; }
.tb-plus { margin-left: -13px; }
.tb-minus { margin-left: -6px; }
.tb-eye { margin-left: -5px; }
.tb-drop { position: absolute; right: -6px; bottom: -10px; border-left: 3px solid transparent; border-right: 3px solid transparent; border-top: 4px solid #555; }

.rv-main { height: 688px; margin-top: 2px; display: flex; flex: none; }
.displays { width: 341px; margin-left: 1px; flex: none; display: flex; flex-direction: column; }
.paneltitle { height: 23px; flex: none; background: #b5b5b5; display: flex; align-items: center; padding-left: 4px; position: relative; }
.pt-name { margin-left: 5px; }
.time-title .pt-name { margin-left: 7px; }
.pt-close { position: absolute; right: 2px; top: 3px; }
.tree { height: 548px; flex: none; border: 1px solid #b9b9b9; border-top: none; background: #fff; display: flex; flex-direction: column; }
.tr { height: 19px; flex: none; display: flex; }
.tr-fill { flex: 1; }
.nm { width: 169px; flex: none; border-right: 1px solid #dcdcdc; display: flex; align-items: center; white-space: nowrap; padding-left: 6px; }
.nm-c { padding-left: 42px; }
.nm-l1 { padding-left: 43px; }
.vl { padding-left: 3px; display: flex; align-items: center; white-space: nowrap; }
.ar { width: 0; height: 0; flex: none; }
.ar-d { border-left: 4px solid transparent; border-right: 4px solid transparent; border-top: 4px solid #666; margin-right: 9px; }
.ar-r { border-top: 4px solid transparent; border-bottom: 4px solid transparent; border-left: 4px solid #666; margin: 0 11px 0 2px; }
.ar-l1 { margin: 0 11px 0 -15px; }
.ic { margin-right: 7px; flex: none; }
.ic-l1 { margin-right: 6px; flex: none; }
.c-warn { color: #e09208; }
.c-blue { color: #1d6fc4; font-weight: 700; }
.cb { width: 14px; height: 14px; border: 1px solid #bcbcbc; background: #fff; display: flex; align-items: center; justify-content: center; color: #111; flex: none; }
.cb-blue { color: #2a72c0; }
.swatch { width: 13px; height: 13px; margin: 0 4px 0 3px; border: 1px solid #111; flex: none; }
.sw-bg { background: #303030; } .sw-min { background: #000; } .sw-max { background: #fff; }
.descbox { height: 77px; margin-top: 4px; flex: none; background: #fff; border: 1px solid #c0c0c0; }
.dbtns { margin-top: 7px; height: 25px; display: flex; gap: 6px; padding-left: 2px; }
.dbtns .btn { height: 25px; }
.split { width: 22px; flex: none; display: flex; align-items: center; justify-content: center; }
.tri-l { width: 0; height: 0; border-top: 4px solid transparent; border-bottom: 4px solid transparent; border-right: 4px solid #666; }
.view { width: 888px; height: 688px; flex: none; background: #303030; display: block; }
.sidebar { width: 13px; flex: none; display: flex; align-items: center; justify-content: center; background: #dcdcdc; border-radius: 3px; border: 1px solid #c4c4c4; }

.time-title { margin-top: 6px; height: 22px; }
.timerow { display: flex; align-items: center; height: 25px; margin-top: 7px; padding: 0 17px 0 11px; white-space: nowrap; flex: none; }
.exp { display: flex; align-items: center; gap: 6px; margin-left: auto; font-size: 14.600px; }
.statusrow { display: flex; align-items: center; height: 24px; margin-top: 11px; padding-left: 2px; position: relative; flex: none; }
.hint { margin-left: 7px; padding-bottom: 2px; font-size: 14.500px; }
.hint b { font-weight: 700; }
.fps { margin-left: auto; margin-right: 24px; margin-top: -6px; }
```
FILE: script.js
```js
(function () {
  var canvas = document.getElementById('cloud');
  var c = canvas.getContext('2d');
  var seed = 7;
  function R() { seed = (seed * 16807) % 2147483647; return seed / 2147483647; }
  function X(z) { return z / 1.742 + 1; }
  function Y(z) { return z / 2.795 + 129; }
  var RED = '#ff2400', DRED = '#d81c00', YEL = '#eef000';

  // ground grid (canvas coordinates)
  var T = [440, 252], Rt = [612, 345], B = [444, 483], L = [275, 344];
  c.strokeStyle = 'rgba(150,150,150,.8)'; c.lineWidth = 1;
  for (var g = 0; g <= 10; g++) {
    var t = g / 10;
    c.beginPath();
    c.moveTo(T[0] + (Rt[0] - T[0]) * t, T[1] + (Rt[1] - T[1]) * t);
    c.lineTo(L[0] + (B[0] - L[0]) * t, L[1] + (B[1] - L[1]) * t);
    c.moveTo(T[0] + (L[0] - T[0]) * t, T[1] + (L[1] - T[1]) * t);
    c.lineTo(Rt[0] + (B[0] - Rt[0]) * t, Rt[1] + (B[1] - Rt[1]) * t);
    c.stroke();
  }

  function curve(p, col, w) {
    c.strokeStyle = col; c.lineWidth = w || 1.3; c.beginPath();
    c.moveTo(X(p[0]), Y(p[1]));
    if (p.length === 8) c.bezierCurveTo(X(p[2]), Y(p[3]), X(p[4]), Y(p[5]), X(p[6]), Y(p[7]));
    else if (p.length === 6) c.quadraticCurveTo(X(p[2]), Y(p[3]), X(p[4]), Y(p[5]));
    else for (var i = 2; i < p.length; i += 2) c.lineTo(X(p[i]), Y(p[i + 1]));
    c.stroke();
  }
  function poly(p, fill) {
    c.fillStyle = fill; c.beginPath(); c.moveTo(X(p[0]), Y(p[1]));
    for (var i = 2; i < p.length; i += 2) c.lineTo(X(p[i]), Y(p[i + 1]));
    c.closePath(); c.fill();
  }
  function dots(x0, y0, x1, y1, step, col, s) {
    var dx = X(x1) - X(x0), dy = Y(y1) - Y(y0), d = Math.sqrt(dx * dx + dy * dy), n = Math.max(1, Math.round(d / step));
    c.fillStyle = col;
    for (var i = 0; i <= n; i++) {
      c.fillRect(X(x0) + dx * i / n, Y(y0) + dy * i / n, s || 1.5, s || 1.5);
    }
  }
  function lattice(a, b, cc, d, nu, nv, colfn, s, warp) {
    for (var u = 0; u <= nu; u++) {
      var tu = warp ? Math.pow(u / nu, warp) : u / nu;
      for (var v = 0; v <= nv; v++) {
        var tv = v / nv;
        var x = (a[0] * (1 - tu) + b[0] * tu) * (1 - tv) + (d[0] * (1 - tu) + cc[0] * tu) * tv;
        var y = (a[1] * (1 - tu) + b[1] * tu) * (1 - tv) + (d[1] * (1 - tu) + cc[1] * tu) * tv;
        c.fillStyle = colfn(R());
        c.fillRect(X(x), Y(y), s || 1.3, s || 1.3);
      }
    }
  }
  function scatter(line, n, spread, colfn) {
    for (var i = 0; i < n; i++) {
      var seg = Math.floor(R() * (line.length / 2 - 1)) * 2, k = R();
      var x = line[seg] + (line[seg + 2] - line[seg]) * k + (R() - .5) * spread;
      var y = line[seg + 1] + (line[seg + 3] - line[seg + 1]) * k + (R() - .5) * spread;
      c.fillStyle = colfn(R());
      c.fillRect(X(x), Y(y), 1.4, 1.4);
    }
  }

  // top-of-view scans, taken directly in canvas coordinates
  function top(x0, y0, x1, y1, step, col) {
    var ax = 121 + x0 / 1.96, ay = y0 / 3 - 101, bx = 121 + x1 / 1.96, by = y1 / 3 - 101;
    var n = Math.round(Math.hypot(bx - ax, by - ay) / step);
    c.fillStyle = col;
    for (var i = 0; i <= n; i++) c.fillRect(ax + (bx - ax) * i / n, ay + (by - ay) * i / n, 1.2, 1.2);
  }
  [[505, 305, 663, 355], [545, 305, 663, 342], [580, 305, 663, 332], [465, 322, 663, 395], [460, 350, 663, 420], [467, 378, 560, 425], [560, 455, 663, 525]].forEach(function (l, i) {
    top(l[0], l[1], l[2], l[3], 1.8, i % 2 ? '#a8941e' : '#9a8a20');
  });
  top(480, 470, 560, 460, 1.5, '#b84a10'); top(630, 532, 663, 548, 1.5, '#b04818');
  top(490, 595, 660, 590, 1.5, '#b83a10'); top(458, 575, 495, 580, 1.5, '#b04818');
  top(30, 572, 75, 568, 2, '#a83a10'); top(35, 595, 78, 588, 2, '#a83a10');
  [[368, 318], [385, 365], [400, 432], [445, 425], [435, 458], [415, 485], [418, 520], [395, 330]].forEach(function (p) { top(p[0], p[1], p[0] + 2, p[1], 3, '#8a2a10'); });

  curve([620, 20, 700, 8, 790, -2], '#a01c08', 1.2);
  curve([632, 88, 700, 84, 792, 72], '#a01c08', 1.2);
  [[255, 17, 295, 10], [260, 35, 298, 28], [262, 55, 298, 45], [272, 72, 302, 62]].forEach(function (l) { dots(l[0], l[1], l[2], l[3], 2.5, '#8a8a20', 1.2); });

  // left dotted walls
  for (var a = 0; a < 11; a++) {
    var oy = a * 13;
    dots(190, 385 + oy, 440, 328 + oy * 0.95, 2.2, a % 3 ? '#d98a10' : '#e8a018', 1.4);
    dots(20, 495 + oy * 0.9, 190, 450 + oy, 3.4, a % 2 ? '#d03a10' : '#c86010', 1.4);
    dots(260, 330 + a * 3, 425, 322 + a * 3, 4, '#c87010', 1.2);
  }
  for (a = 0; a < 12; a++) {
    dots(505 + a, 210 + a * 9, 680, 170 + a * 9, 2.2, a % 4 ? '#d98a10' : '#e8a018', 1.4);
  }
  for (a = 0; a < 17; a++) {
    dots(455, 295 + a * 5, 780, 225 + a * 7, 2.4, a % 2 ? '#c8600e' : '#a83a10', 1.3);
  }
  lattice([790, 150], [835, 130], [830, 290], [795, 300], 10, 22, function (r) { return r < .5 ? '#e8a018' : '#c8501a'; }, 1.3);
  lattice([425, 235], [470, 215], [470, 330], [430, 345], 8, 14, function (r) { return r < .7 ? '#e8a018' : '#c8601a'; }, 1.3);
  lattice([205, 770], [260, 760], [320, 910], [240, 930], 11, 26, function (r) { return r < .6 ? '#ff5a10' : '#c84a10'; }, 1.5);
  curve([190, 390, 215, 520, 225, 575], '#d8900e', 7);

  // pillars and long bright lines
  curve([425, 320, 440, 400, 450, 520, 466, 670], '#f8ea00', 2.2);
  curve([425, 235, 428, 320, 435, 400], '#ee9010', 3.5);
  curve([455, 530, 465, 670], '#f0f000', 3);
  curve([480, 182, 640, 150, 830, 97], '#c8d414', 1.4);
  curve([440, 182, 480, 178], '#d8d810', 1.2);
  curve([440, 280, 520, 225, 680, 230, 780, 200], '#f0d000', 1.6);
  curve([680, 240, 780, 205], '#dce010', 1.6);
  curve([685, 205, 740, 185], '#b0e010', 1.6);
  curve([700, 295, 730, 285], '#d8e010', 1.6); curve([695, 315, 740, 305], '#d8e010', 1.6);
  curve([708, 292, 722, 289], '#e010d0', 2); curve([708, 312, 726, 308], '#e010d0', 2);
  lattice([822, 330], [834, 330], [834, 390], [824, 390], 2, 12, function () { return '#e8e010'; }, 1.4);
  lattice([788, 155], [812, 150], [810, 290], [795, 290], 3, 10, function () { return '#f0e010'; }, 1.4);

  // left concentric arcs
  [[78, 990, 60, 700, 130, 620], [178, 960, 150, 750, 240, 540], [262, 930, 220, 700, 320, 500], [320, 915, 290, 690, 430, 470], [365, 890, 330, 680, 470, 450],
   [400, 875, 360, 640, 500, 430], [435, 860, 395, 640, 520, 460], [465, 845, 425, 640, 560, 440], [487, 830, 450, 640, 590, 410], [510, 820, 470, 610, 640, 395]].forEach(function (p, i) {
    curve(p, i % 3 ? RED : DRED, 1.4);
  });
  [[470, 480, 560, 390, 770, 350], [450, 440, 560, 350, 810, 320], [470, 400, 600, 340, 790, 320], [660, 395, 760, 385, 870, 420], [670, 385, 780, 360, 860, 400]].forEach(function (p) { curve(p, RED, 1.3); });
  curve([50, 770, 65, 620], '#e8e010', 1.6); curve([120, 755, 130, 630], '#e8e010', 1.6);
  curve([190, 735, 200, 590], '#e8e010', 1.6); curve([150, 550, 170, 490], '#e8e010', 1.6); curve([70, 570, 105, 465], '#e8d810', 1.6);
  curve([190, 735, 215, 775], '#c8c810', 1.6);
  for (a = 0; a < 70; a++) {
    var sx = 0 + R() * 560, sy = 440 + R() * 380;
    c.fillStyle = R() < .3 ? '#e8d810' : '#f03010';
    c.fillRect(X(sx), Y(sy), 1.5 + R() * 3, 1.5 + R() * 4);
  }
  // short broken scan marks along the inner arcs
  for (a = 0; a < 46; a++) {
    var mx = 460 + R() * 330, my = 340 + R() * 170 * (1 - (mx - 460) / 500);
    curve([mx, my, mx + 12 + R() * 24, my - 6 - R() * 16], R() < .2 ? '#e8c810' : '#f02a08', 1.2);
  }

  // central wedge
  lattice([490, 645], [708, 650], [610, 730], [510, 820], 62, 44, function (r) { return r < .4 ? '#ff6c10' : '#e85010'; }, 1.3, 0.8);
  var grad = c.createLinearGradient(X(530), 0, X(620), 0);
  grad.addColorStop(0, 'rgba(255,80,0,0)'); grad.addColorStop(1, 'rgba(255,80,0,1)');
  poly([530, 648, 708, 650, 610, 730, 530, 790], grad);
  var g2 = c.createLinearGradient(0, Y(650), 0, Y(1000));
  g2.addColorStop(0, '#ff6a10'); g2.addColorStop(1, '#ff4000');
  poly([706, 650, 715, 680, 740, 800, 752, 865, 755, 1000, 747, 1000, 736, 860, 708, 712], g2);

  // right wall
  var g3 = c.createLinearGradient(0, Y(190), 0, Y(700));
  g3.addColorStop(0, '#ff6a10'); g3.addColorStop(.3, '#ff8a00'); g3.addColorStop(1, '#ff8c00');
  poly([850, 185, 865, 195, 885, 270, 905, 335, 965, 530, 1018, 700, 985, 690, 962, 690, 925, 560, 872, 430, 847, 345], g3);
  poly([965, 680, 985, 660, 1030, 770, 1060, 880, 1075, 1110, 1040, 1040, 1000, 860, 975, 760], '#ff2a00');
  poly([1010, 840, 1030, 800, 1060, 880, 1050, 960], '#ff8a10');
  var wallCol = function (r) { return r < .5 ? '#ff7a08' : (r < .8 ? '#ff5008' : '#e82008'); };
  scatter([858, 190, 895, 335, 955, 530, 1008, 700], 700, 26, wallCol);
  scatter([850, 345, 875, 430, 930, 560, 966, 690], 500, 22, wallCol);
  scatter([975, 700, 1005, 860, 1050, 1040], 900, 32, function (r) { return r < .65 ? '#ff2000' : '#ff6a08'; });
  scatter([1025, 770, 1060, 880, 1085, 1000], 500, 26, function (r) { return r < .5 ? '#ff8a10' : '#e8500e'; });
  lattice([1060, 1000], [1095, 970], [1165, 1200], [1100, 1200], 15, 50, function (r) { return r < .5 ? '#ff6a10' : '#d8500e'; }, 1.4);
  lattice([1100, 1200], [1165, 1200], [1270, 1560], [1190, 1560], 13, 26, function (r) { return r < .7 ? '#f03a10' : '#e8701a'; }, 1.8);
  curve([1100, 1207, 1165, 1190], '#e8e010', 2);
  curve([850, 190, 880, 300, 910, 420], '#e01a00', 1.2);
  curve([960, 600, 990, 680, 1000, 740], '#d01a00', 1.2);
  curve([1015, 700, 1035, 770], '#d8e010', 1.6);

  // right-hand arcs
  [[745, 1040, 850, 1030, 960, 1000, 1020, 870], [750, 1100, 900, 1090, 1000, 1020, 1040, 930], [750, 1140, 900, 1130, 1030, 1050, 1050, 980],
   [745, 1185, 900, 1190, 1020, 1100, 1060, 1040], [745, 1240, 900, 1240, 1040, 1150, 1075, 1100], [770, 1330, 900, 1290, 1040, 1210, 1100, 1140],
   [720, 1420, 860, 1380, 1050, 1300, 1125, 1210], [715, 1530, 900, 1480, 1060, 1420, 1130, 1340], [1065, 1565, 1130, 1530, 1160, 1500, 1170, 1470],
   [1060, 1415, 1100, 1395, 1140, 1385, 1170, 1370], [725, 1510, 800, 1490, 880, 1480, 930, 1465], [950, 1530, 980, 1520, 1000, 1512, 1020, 1505]].forEach(function (p, i) {
    curve(p, i % 2 ? '#ff2e08' : '#f03208', 1.5);
  });
  [[770, 800, 810, 795], [780, 820, 815, 815], [765, 885, 830, 865], [800, 915, 840, 905], [760, 970, 850, 960], [880, 880, 940, 850], [960, 800, 985, 790], [920, 770, 950, 800], [895, 745, 905, 790]].forEach(function (l) { curve(l, '#f03a08', 1.6); });
  curve([830, 855, 935, 825], '#e8d810', 2);
  // bright streaks
  [[740, 1057, 800, 1045, YEL], [740, 1095, 860, 1060, '#e8d010'], [830, 1030, 1015, 950, '#d8e010'], [868, 998, 960, 975, '#d8e010'], [860, 1060, 940, 1048, '#b8e010'], [840, 1186, 895, 1185, '#e8a010'],
   [930, 1250, 1020, 1220, YEL], [920, 1275, 985, 1250, YEL], [1045, 1230, 1075, 1217, YEL], [880, 1385, 935, 1375, '#90e010'], [990, 1467, 1060, 1440, '#d0e010'], [945, 1120, 985, 1105, '#b0e010']].forEach(function (l) {
    curve(l.slice(0, 4), l[4], 1.9);
  });
  curve([862, 1057, 900, 1045], '#e010d0', 2.2);
  curve([990, 1467, 1000, 1462], '#1090f0', 2.2);
  curve([855, 1060, 862, 1057], '#1090f0', 2.2);
  for (a = 0; a < 90; a++) {
    sx = 760 + R() * 420; sy = 800 + R() * 750;
    c.fillStyle = R() < .2 ? '#e8d810' : '#e83010';
    c.fillRect(X(sx), Y(sy), 1.5, 1.5 + R() * 2);
  }
})();
```
